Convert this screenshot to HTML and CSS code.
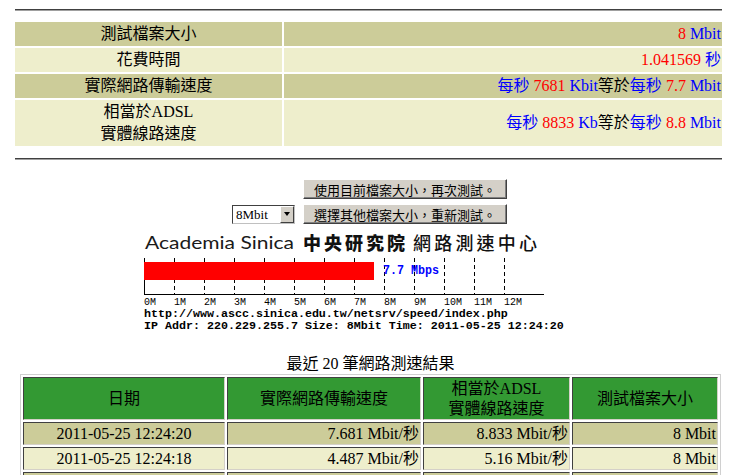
FILE: index.html
```html
<!DOCTYPE html>
<html lang="zh-Hant">
<head>
<meta charset="utf-8">
<title>網路測速</title>
<link rel="stylesheet" href="styles.css">
</head>
<body>
<div class="page">
  <div class="rule"></div>
  <table class="summary">
    <colgroup><col class="c-label"><col class="c-value"></colgroup>
    <tr class="dark">
      <td class="label">測試檔案大小</td>
      <td class="value"><span class="n">8</span> <span class="u">Mbit</span></td>
    </tr>
    <tr class="light">
      <td class="label">花費時間</td>
      <td class="value"><span class="n">1.041569</span> <span class="u">秒</span></td>
    </tr>
    <tr class="dark">
      <td class="label">實際網路傳輸速度</td>
      <td class="value"><span class="u">每秒</span> <span class="n">7681</span> <span class="u">Kbit</span>等於<span class="u">每秒</span> <span class="n">7.7</span> <span class="u">Mbit</span></td>
    </tr>
    <tr class="light">
      <td class="label">相當於ADSL<br>實體線路速度</td>
      <td class="value"><span class="u">每秒</span> <span class="n">8833</span> <span class="u">Kb</span>等於<span class="u">每秒</span> <span class="n">8.8</span> <span class="u">Mbit</span></td>
    </tr>
  </table>
  <div class="rule rule2"></div>

  <form class="controls">
    <button type="button" class="btn btn-again">使用目前檔案大小，再次測試。</button>
    <div class="select"><span class="sel-text">8Mbit</span><span class="sel-arrow"><span class="tri"></span></span></div>
    <button type="button" class="btn btn-other">選擇其他檔案大小，重新測試。</button>
  </form>

  <svg class="chart" width="440" height="106" viewBox="0 0 440 106">
    <text class="brand-en" x="5" y="19" textLength="149" lengthAdjust="spacingAndGlyphs">Academia Sinica</text>
    <text class="brand-zh-b" x="163" y="20" textLength="102" lengthAdjust="spacing">中央研究院</text>
    <text class="brand-zh" x="273" y="20" textLength="124" lengthAdjust="spacing">網路測速中心</text>
    <g class="grid">
      <line x1="34.5" y1="28" x2="34.5" y2="64"/>
      <line x1="64.5" y1="28" x2="64.5" y2="64"/>
      <line x1="94.5" y1="28" x2="94.5" y2="64"/>
      <line x1="124.5" y1="28" x2="124.5" y2="64"/>
      <line x1="154.5" y1="28" x2="154.5" y2="64"/>
      <line x1="184.5" y1="28" x2="184.5" y2="64"/>
      <line x1="214.5" y1="28" x2="214.5" y2="64"/>
      <line x1="244.5" y1="28" x2="244.5" y2="64"/>
      <line x1="274.5" y1="28" x2="274.5" y2="64"/>
      <line x1="304.5" y1="28" x2="304.5" y2="64"/>
      <line x1="334.5" y1="28" x2="334.5" y2="64"/>
      <line x1="364.5" y1="28" x2="364.5" y2="64"/>
    </g>
    <rect class="axis" x="4" y="28" width="1" height="37"/>
    <rect class="axis" x="4" y="64" width="400" height="1"/>
    <rect class="bar" x="4" y="32" width="230" height="18"/>
    <text class="speed" x="243" y="44" textLength="56" lengthAdjust="spacingAndGlyphs">7.7 Mbps</text>
    <g class="ticks">
      <text x="4" y="75">0M</text>
      <text x="34" y="75">1M</text>
      <text x="64" y="75">2M</text>
      <text x="94" y="75">3M</text>
      <text x="124" y="75">4M</text>
      <text x="154" y="75">5M</text>
      <text x="184" y="75">6M</text>
      <text x="214" y="75">7M</text>
      <text x="244" y="75">8M</text>
      <text x="274" y="75">9M</text>
      <text x="304" y="75">10M</text>
      <text x="334" y="75">11M</text>
      <text x="364" y="75">12M</text>
    </g>
    <text class="info" x="4" y="87">http://www.ascc.sinica.edu.tw/netsrv/speed/index.php</text>
    <text class="info" x="4" y="99">IP Addr: 220.229.255.7 Size: 8Mbit Time: 2011-05-25 12:24:20</text>
  </svg>

  <div class="caption">最近 20 筆網路測速結果</div>
  <table class="history">
    <colgroup><col class="h1"><col class="h2"><col class="h3"><col class="h4"></colgroup>
    <tr class="head">
      <td>日期</td>
      <td>實際網路傳輸速度</td>
      <td>相當於ADSL<br>實體線路速度</td>
      <td>測試檔案大小</td>
    </tr>
    <tr class="dark">
      <td class="date">2011-05-25 12:24:20</td>
      <td class="num">7.681 Mbit/秒</td>
      <td class="num">8.833 Mbit/秒</td>
      <td class="num">8 Mbit</td>
    </tr>
    <tr class="light">
      <td class="date">2011-05-25 12:24:18</td>
      <td class="num">4.487 Mbit/秒</td>
      <td class="num">5.16 Mbit/秒</td>
      <td class="num">8 Mbit</td>
    </tr>
    <tr class="dark">
      <td class="date">2011-05-25 12:24:15</td>
      <td class="num">6.102 Mbit/秒</td>
      <td class="num">7.017 Mbit/秒</td>
      <td class="num">8 Mbit</td>
    </tr>
  </table>
</div>
</body>
</html>
```
FILE: styles.css
```css
html {
  overflow: hidden;
}

body {
  margin: 0;
  background: #ffffff;
  color: #000000;
  font-family: "Liberation Serif", "Noto Sans CJK TC", serif;
  font-size: 16px;
}

.page {
  margin-left: 15px;
  width: 707px;
  padding-top: 9px;
}

.rule {
  height: 0;
  border-top: 1px solid #404040;
  border-bottom: 1px solid #a0a0a0;
}

.rule2 {
  margin-top: 10px;
}

/* ---------- summary table ---------- */
.summary {
  margin: 9px 0 0 -2px;
  width: 711px;
  border-spacing: 2px;
  table-layout: fixed;
}

.summary .c-label { width: 267px; }
.summary .c-value { width: 438px; }

.summary td {
  padding: 1px 1px;
  line-height: 22px;
  vertical-align: middle;
}

.dark td { background: #cccc99; }
.light td { background: #eeeecc; }

.summary .label { text-align: center; }
.summary .value { text-align: right; white-space: nowrap; }

.n { color: #ff0000; }
.u { color: #0000ff; }

/* ---------- controls ---------- */
.controls {
  margin: 19px 0 0 217px;
  display: grid;
  grid-template-columns: 63px 204px;
  grid-template-rows: 20px 20px;
  column-gap: 8px;
  row-gap: 5px;
}

.btn {
  box-sizing: border-box;
  width: 204px;
  height: 20px;
  margin: 0;
  padding: 0;
  background: #d4d0c8;
  border-style: solid;
  border-width: 1px;
  border-color: #ffffff #404040 #404040 #ffffff;
  box-shadow: inset -1px -1px 0 #808080;
  font-family: "Noto Sans CJK TC", sans-serif;
  font-size: 13px;
  line-height: 17px;
  color: #000000;
  text-align: center;
}

.btn-again { grid-column: 2; grid-row: 1; }
.btn-other { grid-column: 2; grid-row: 2; }

.select {
  grid-column: 1;
  grid-row: 2;
  align-self: center;
  box-sizing: border-box;
  width: 63px;
  height: 19px;
  display: flex;
  background: #ffffff;
  border: 1px solid #404040;
  border-right-color: #c0c0c0;
  border-bottom-color: #c0c0c0;
}

.sel-text {
  flex: 1;
  padding-left: 3px;
  font-family: "Liberation Serif", serif;
  font-size: 13px;
  line-height: 17px;
}

.sel-arrow {
  box-sizing: border-box;
  width: 14px;
  height: 17px;
  background: #d4d0c8;
  border-style: solid;
  border-width: 1px;
  border-color: #ffffff #404040 #404040 #ffffff;
  display: flex;
  align-items: center;
  justify-content: center;
}

.tri {
  width: 0;
  height: 0;
  border-left: 3.5px solid transparent;
  border-right: 3.5px solid transparent;
  border-top: 4px solid #000000;
}

/* ---------- chart ---------- */
.chart {
  display: block;
  margin: 6px 0 0 125px;
}

.brand-en {
  font-family: Lato, "DejaVu Sans", sans-serif;
  font-size: 17px;
  fill: #1a1a1a;
}

.brand-zh-b {
  font-family: "Noto Sans CJK TC", sans-serif;
  font-size: 18px;
  font-weight: 900;
  fill: #111111;
}

.brand-zh {
  font-family: "Noto Sans CJK TC", sans-serif;
  font-size: 18px;
  font-weight: 500;
  fill: #111111;
}

.grid line {
  stroke: #000000;
  stroke-width: 1;
  stroke-dasharray: 4 3;
}

.axis { fill: #000000; }
.bar { fill: #ff0000; }

.speed {
  font-family: "Liberation Mono", monospace;
  font-size: 12px;
  font-weight: bold;
  fill: #0000ff;
}

.ticks text {
  font-family: "Liberation Mono", monospace;
  font-size: 10px;
  fill: #000000;
}

.info {
  font-family: "Liberation Mono", monospace;
  font-size: 11.67px;
  font-weight: bold;
  fill: #000000;
}

/* ---------- history ---------- */
.caption {
  margin: 19px 0 0 5px;
  width: 701px;
  height: 19px;
  line-height: 18px;
  text-align: center;
}

.history {
  margin-left: 5px;
  width: 701px;
  border: 1px solid #d0d0d0;
  border-spacing: 2px;
  table-layout: fixed;
}

.history .h1 { width: 202px; }
.history .h2 { width: 194px; }
.history .h3 { width: 147px; }
.history .h4 { width: 146px; }

.history td {
  border-style: solid;
  border-width: 1px;
  border-color: #404040 #d4d0c8 #d4d0c8 #404040;
  padding: 0 1px;
  line-height: 21px;
  white-space: nowrap;
}

.history .head td {
  background: #339933;
  text-align: center;
  vertical-align: middle;
  line-height: 20px;
  padding: 1px 0 0;
}

.history .date { text-align: center; }
.history .num { text-align: right; }
```
